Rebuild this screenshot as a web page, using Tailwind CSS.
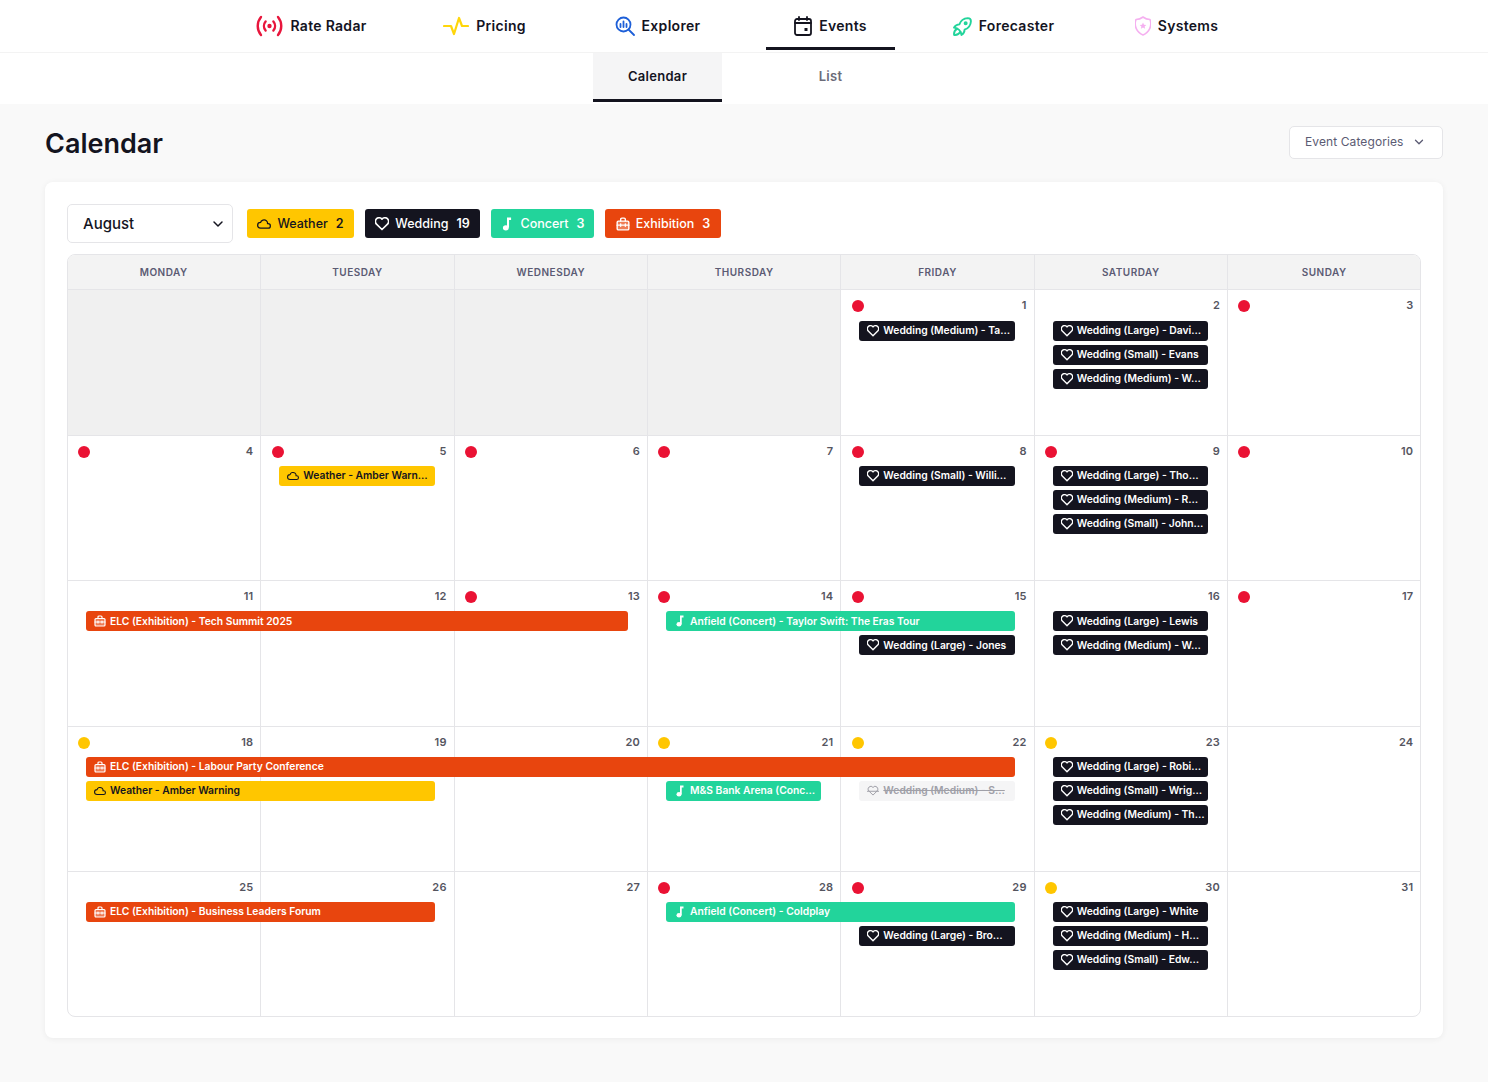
<!DOCTYPE html>
<html lang="en">
<head>
  <meta charset="UTF-8" />
  <meta name="viewport" content="width=device-width, initial-scale=1.0" />
  <title>Events Calendar</title>
  <script src="https://cdn.jsdelivr.net/npm/@tailwindcss/browser@4"></script>
</head>
<body class="bg-[#f9f9f9] text-[#14141f] font-['Inter',sans-serif] min-h-[1082px]">

  <!-- Main nav -->
  <nav class="bg-white h-[53px] border-b border-[#f3f3f3]">
    <div class="w-[1038px] mx-auto grid grid-cols-6 h-full">
      <a class="mx-[22px] h-[50px] pt-[5px] border-b-[3px] border-transparent flex items-center justify-center gap-[7px] text-sm font-semibold tracking-[0.3px]">
        <svg class="w-[27px] h-[24px]" viewBox="0 0 27 24" fill="none" stroke="#e8163c" stroke-width="2.400" stroke-linecap="round"><circle cx="13.5" cy="12" r="2.200" fill="#e8163c" stroke="none"/><path d="M9.6 7.5a7 7 0 0 0 0 9M17.4 7.5a7 7 0 0 1 0 9"/><path d="M5 3a14 14 0 0 0 0 18M22 3a14 14 0 0 1 0 18"/></svg>
        Rate Radar
      </a>
      <a class="mx-[22px] h-[50px] pt-[5px] border-b-[3px] border-transparent flex items-center justify-center gap-[7px] text-sm font-semibold tracking-[0.3px]">
        <svg class="w-[26px] h-[20px]" viewBox="0 0 26 20" fill="none" stroke="#ffd60a" stroke-width="2.200" stroke-linecap="round" stroke-linejoin="round"><path d="M1 10h7l3 8 5-16 3 8h6"/></svg>
        Pricing
      </a>
      <a class="mx-[22px] h-[50px] pt-[5px] border-b-[3px] border-transparent flex items-center justify-center gap-[7px] text-sm font-semibold tracking-[0.3px]">
        <svg class="w-[20px] h-[20px]" viewBox="0 0 20 20" fill="none" stroke="#1d5fd8" stroke-width="1.800" stroke-linecap="round"><circle cx="8.5" cy="8.5" r="7"/><path d="M13.5 13.5L19 19M5.5 8v3M8.5 5.5V11M11.5 8v3"/></svg>
        Explorer
      </a>
      <a class="mx-[22px] h-[50px] pt-[5px] border-b-[3px] border-[#14141f] flex items-center justify-center gap-[7px] text-sm font-semibold tracking-[0.3px]">
        <svg class="w-[18px] h-[20px]" viewBox="0 0 18 20" fill="none" stroke="#14141f" stroke-width="1.800" stroke-linecap="round"><rect x="1" y="3" width="16" height="16" rx="2"/><path d="M5 1v3M13 1v3M1 7h16"/><rect x="10.500" y="12" width="3" height="3" fill="#14141f" stroke="none"/></svg>
        Events
      </a>
      <a class="mx-[22px] h-[50px] pt-[5px] border-b-[3px] border-transparent flex items-center justify-center gap-[7px] text-sm font-semibold tracking-[0.3px]">
        <svg class="w-[19px] h-[20px]" viewBox="3 2 18 19" fill="none" stroke="#22d49b" stroke-width="1.800" stroke-linecap="round" stroke-linejoin="round"><path d="M4 13a8 8 0 0 1 7 7a6 6 0 0 0 3 -5a9 9 0 0 0 6 -8a3 3 0 0 0 -3 -3a9 9 0 0 0 -8 6a6 6 0 0 0 -5 3"/><path d="M7 14a6 6 0 0 0 -3 6a6 6 0 0 0 6 -3"/><circle cx="15" cy="9" r="1"/></svg>
        Forecaster
      </a>
      <a class="mx-[22px] h-[50px] pt-[5px] border-b-[3px] border-transparent flex items-center justify-center gap-[7px] text-sm font-semibold tracking-[0.3px]">
        <svg class="w-[16px] h-[20px]" viewBox="0 0 16 20" fill="none" stroke="#f5b0f0" stroke-width="1.600" stroke-linejoin="round"><path d="M8 1a12 12 0 0 0 7 2.500a12 12 0 0 1 -7 15.500a12 12 0 0 1 -7 -15.500a12 12 0 0 0 7 -2.500z"/><path d="M8 6.500l1 2.200 2.300.2-1.700 1.500.5 2.300-2.100-1.200-2.100 1.200.5-2.300-1.700-1.500 2.300-.2z" fill="#f5b0f0" stroke="none"/></svg>
        Systems
      </a>
    </div>
  </nav>

  <!-- Sub tabs -->
  <div class="bg-white h-[51px]">
    <div class="w-[346px] mx-auto grid grid-cols-2">
      <a class="mx-[22px] h-[49px] pt-px bg-[#f5f5f6] border-b-[3px] border-[#14141f] flex items-center justify-center text-[13px] font-semibold tracking-[0.3px]">Calendar</a>
      <a class="mx-[22px] h-[49px] pt-px border-b-[3px] border-transparent flex items-center justify-center text-[13px] font-semibold tracking-[0.3px] text-[#6b6b78]">List</a>
    </div>
  </div>

  <main class="px-[45px]">
    <div class="flex items-center justify-between h-[78px]">
      <h1 class="mt-0.5 text-[27px] font-semibold">Calendar</h1>
      <button class="mb-0.5 w-[154px] h-[33px] bg-white border border-[#e5e5e8] rounded-[5px] flex items-center justify-between pl-[15px] pr-[16px] text-xs tracking-[0.1px] text-[#5b5b73]">
        Event Categories
        <svg class="w-[14px] h-[14px]" viewBox="0 0 24 24" fill="none" stroke="#5b5b73" stroke-width="2.200" stroke-linecap="round" stroke-linejoin="round"><path d="M6 9l6 6 6-6"/></svg>
      </button>
    </div>

    <section class="bg-white rounded-lg shadow-[0_1px_6px_rgba(0,0,0,0.06)] p-[22px] h-[856px]">
      <!-- Filters -->
      <div class="flex items-center gap-[11px] h-[39px] mb-[11px]">
        <div class="w-[166px] h-[39px] pt-px border border-[#e5e5e8] rounded-[5px] flex items-center justify-between pl-[15px] pr-[6px] text-[15px] font-medium mr-[3px]">
          August
          <svg class="w-[16px] h-[16px]" viewBox="0 0 24 24" fill="none" stroke="#14141f" stroke-width="2.200" stroke-linecap="round" stroke-linejoin="round"><path d="M6 9l6 6 6-6"/></svg>
        </div>
        <div id="filters" class="contents"></div>
      </div>

      <!-- Calendar -->
      <div class="border border-[#e5e5e8] rounded-lg overflow-hidden h-[763px] flex flex-col">
        <div class="-ml-px w-[1353.33px] grid grid-cols-7 h-[35px] bg-[#f3f3f3] border-b border-[#e5e5e8] shrink-0">
          <div class="flex items-center justify-center text-[10px] font-semibold tracking-wider text-[#5b5b73]">MONDAY</div>
          <div class="flex items-center justify-center border-l border-[#e5e5e8] text-[10px] font-semibold tracking-wider text-[#5b5b73]">TUESDAY</div>
          <div class="flex items-center justify-center border-l border-[#e5e5e8] text-[10px] font-semibold tracking-wider text-[#5b5b73]">WEDNESDAY</div>
          <div class="flex items-center justify-center border-l border-[#e5e5e8] text-[10px] font-semibold tracking-wider text-[#5b5b73]">THURSDAY</div>
          <div class="flex items-center justify-center border-l border-[#e5e5e8] text-[10px] font-semibold tracking-wider text-[#5b5b73]">FRIDAY</div>
          <div class="flex items-center justify-center border-l border-[#e5e5e8] text-[10px] font-semibold tracking-wider text-[#5b5b73]">SATURDAY</div>
          <div class="flex items-center justify-center border-l border-[#e5e5e8] text-[10px] font-semibold tracking-wider text-[#5b5b73]">SUNDAY</div>
        </div>
        <div id="weeks" class="-ml-px w-[1353.33px] flex-1 flex flex-col"></div>
      </div>
    </section>
  </main>

  <script>
    const icons = {
      heart: '<svg class="w-full h-full" viewBox="2.5 3.5 19 18" fill="none" stroke="currentColor" stroke-width="2.200" stroke-linecap="round" stroke-linejoin="round"><path d="M19.5 12.572l-7.5 7.428l-7.5 -7.428a5 5 0 1 1 7.5 -6.566a5 5 0 1 1 7.5 6.572"/></svg>',
      cloud: '<svg class="w-full h-full" viewBox="1 3 22 17" fill="none" stroke="currentColor" stroke-width="2" stroke-linecap="round" stroke-linejoin="round"><path d="M6.657 18c-2.572 0 -4.657 -2.007 -4.657 -4.483c0 -2.475 2.085 -4.482 4.657 -4.482c.393 -1.762 1.794 -3.2 3.675 -3.773c1.88 -.572 3.956 -.193 5.444 1c1.488 1.19 2.162 3.007 1.77 4.769h.99c1.913 0 3.464 1.56 3.464 3.486c0 1.927 -1.551 3.487 -3.465 3.487h-11.878"/></svg>',
      music: '<svg class="w-full h-full" viewBox="0 0 24 24" fill="currentColor"><ellipse cx="10" cy="18.500" rx="5" ry="4.500"/><path d="M12 18V1h7v4h-3.500v13z"/></svg>',
      case: '<svg class="w-full h-full" viewBox="0 0 24 24" fill="none" stroke="currentColor" stroke-width="2.400" stroke-linecap="round" stroke-linejoin="round"><rect x="2" y="7" width="20" height="15" rx="2" fill="currentColor" fill-opacity=".3"/><path d="M8 7V4a2 2 0 0 1 2-2h4a2 2 0 0 1 2 2v3M2 14h20M8 12v4M16 12v4"/></svg>',
      off: '<svg class="w-full h-full" viewBox="1 3 22 19" fill="none" stroke="currentColor" stroke-width="1.800" stroke-linecap="round" stroke-linejoin="round"><path d="M19.5 12.572l-7.5 7.428l-7.5 -7.428a5 5 0 1 1 7.5 -6.566a5 5 0 1 1 7.5 6.572"/><path d="M1 13h22"/></svg>'
    };

    const styles = {
      dark: "bg-[#14141f] text-white",
      yellow: "bg-[#ffc600] text-[#14141f]",
      teal: "bg-[#22d49b] text-white",
      orange: "bg-[#e8450e] text-white",
      muted: "bg-[#f5f5f6] text-[#a0a0a8] line-through"
    };

    const filterData = [
      ["yellow", "cloud", "Weather", "2", "w-[107px]"],
      ["dark", "heart", "Wedding", "19", "w-[115px]"],
      ["teal", "music", "Concert", "3", "w-[103px]"],
      ["orange", "case", "Exhibition", "3", "w-[116px]"]
    ];

    document.getElementById("filters").innerHTML = filterData.map(([s, i, label, n, w]) => `
      <div class="${styles[s]} ${w} h-[29px] pt-px rounded-[3px] flex items-center justify-center gap-[6px] text-[12.5px] font-medium">
        <span class="w-[14px] h-[14px] flex items-center">${icons[i]}</span><span>${label}</span><span class="ml-[2px] font-semibold">${n}</span>
      </div>`).join("");

    const colStart = ["col-start-1", "col-start-2", "col-start-3", "col-start-4", "col-start-5", "col-start-6", "col-start-7"];
    const colSpan = ["col-span-1", "col-span-1", "col-span-2", "col-span-3", "col-span-4", "col-span-5"];

    // cells: [date, dot]; events: [col, span, row, style, icon, text]
    const weeks = [
      { cells: [null, null, null, null, [1, "r"], [2, ""], [3, "r"]], events: [
        [5, 1, 2, "dark", "heart", "Wedding (Medium) - Ta…"],
        [6, 1, 2, "dark", "heart", "Wedding (Large) - Davi…"],
        [6, 1, 3, "dark", "heart", "Wedding (Small) - Evans"],
        [6, 1, 4, "dark", "heart", "Wedding (Medium) - W…"]
      ]},
      { cells: [[4, "r"], [5, "r"], [6, "r"], [7, "r"], [8, "r"], [9, "r"], [10, "r"]], events: [
        [2, 1, 2, "yellow", "cloud", "Weather - Amber Warn…"],
        [5, 1, 2, "dark", "heart", "Wedding (Small) - Willi…"],
        [6, 1, 2, "dark", "heart", "Wedding (Large) - Tho…"],
        [6, 1, 3, "dark", "heart", "Wedding (Medium) - R…"],
        [6, 1, 4, "dark", "heart", "Wedding (Small) - John…"]
      ]},
      { cells: [[11, ""], [12, ""], [13, "r"], [14, "r"], [15, "r"], [16, ""], [17, "r"]], events: [
        [1, 3, 2, "orange", "case", "ELC (Exhibition) - Tech Summit 2025"],
        [4, 2, 2, "teal", "music", "Anfield (Concert) - Taylor Swift: The Eras Tour"],
        [5, 1, 3, "dark", "heart", "Wedding (Large) - Jones"],
        [6, 1, 2, "dark", "heart", "Wedding (Large) - Lewis"],
        [6, 1, 3, "dark", "heart", "Wedding (Medium) - W…"]
      ]},
      { cells: [[18, "y"], [19, ""], [20, ""], [21, "y"], [22, "y"], [23, "y"], [24, ""]], events: [
        [1, 5, 2, "orange", "case", "ELC (Exhibition) - Labour Party Conference"],
        [1, 2, 3, "yellow", "cloud", "Weather - Amber Warning"],
        [4, 1, 3, "teal", "music", "M&amp;S Bank Arena (Conc…"],
        [5, 1, 3, "muted", "off", "Wedding (Medium) - S…"],
        [6, 1, 2, "dark", "heart", "Wedding (Large) - Robi…"],
        [6, 1, 3, "dark", "heart", "Wedding (Small) - Wrig…"],
        [6, 1, 4, "dark", "heart", "Wedding (Medium) - Th…"]
      ]},
      { cells: [[25, ""], [26, ""], [27, ""], [28, "r"], [29, "r"], [30, "y"], [31, ""]], events: [
        [1, 2, 2, "orange", "case", "ELC (Exhibition) - Business Leaders Forum"],
        [4, 2, 2, "teal", "music", "Anfield (Concert) - Coldplay"],
        [5, 1, 3, "dark", "heart", "Wedding (Large) - Bro…"],
        [6, 1, 2, "dark", "heart", "Wedding (Large) - White"],
        [6, 1, 3, "dark", "heart", "Wedding (Medium) - H…"],
        [6, 1, 4, "dark", "heart", "Wedding (Small) - Edw…"]
      ]}
    ];

    const rowClass = { 2: "row-start-2", 3: "row-start-3", 4: "row-start-4" };
    const dots = { r: "bg-[#ea1234]", y: "bg-[#ffc600]" };

    document.getElementById("weeks").innerHTML = weeks.map((week, w) => {
      const cells = week.cells.map((cell, i) => {
        const edge = i > 0 ? "border-l border-[#e5e5e8]" : "";
        const top = w > 0 ? "border-t border-[#e5e5e8]" : "";
        if (!cell) return `<div class="${colStart[i]} row-start-1 row-span-5 bg-[#f0f0f0] ${edge}"></div>`;
        const dot = cell[1] ? `<span class="w-3 h-3 rounded-full ${dots[cell[1]]}"></span>` : "";
        return `<div class="${colStart[i]} row-start-1 row-span-5 ${top} ${edge} flex items-start pl-[10.5px] pr-[7px] pt-[10px]">${dot}<span class="ml-auto -mt-px text-[11px] font-semibold tracking-[0.2px] leading-[12px] text-[#55555f]">${cell[0]}</span></div>`;
      }).join("");
      const events = week.events.map(([col, span, row, s, icon, text]) => `
        <div class="${colStart[col - 1]} ${colSpan[span]} ${rowClass[row]} ${styles[s]} z-10 mx-[19px] h-5 self-start rounded-[3px] px-2 flex items-center gap-[4px] text-[10.3px] font-semibold whitespace-nowrap overflow-hidden">
          <span class="w-3 h-3 shrink-0 flex items-center">${icons[icon]}</span><span>${text}</span>
        </div>`).join("");
      return `<div class="flex-1 grid grid-cols-7 grid-rows-[31px_24px_24px_24px_1fr]">${cells}${events}</div>`;
    }).join("");
  </script>
</body>
</html>
